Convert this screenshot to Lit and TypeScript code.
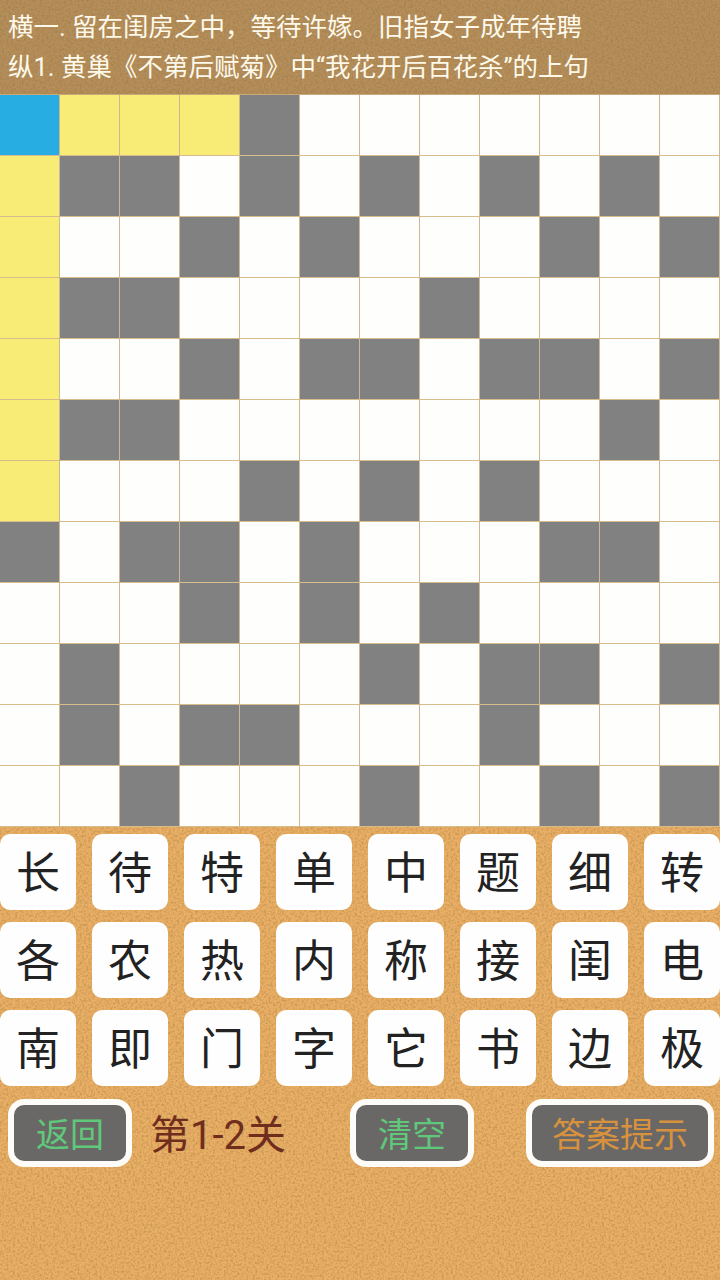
import { LitElement, html, css, svg } from "lit";
import { customElement } from "lit/decorators.js";

const MAP = [
  "byyyd.......",
  "ydd.d.d.d.d.",
  "y..d.d...d.d",
  "ydd....d....",
  "y..d.dd.dd.d",
  "ydd.......d.",
  "y...d.d.d...",
  "d.dd.d...dd.",
  "...d.d.d....",
  ".d....d.dd.d",
  ".d.dd...d...",
  "..d...d..d.d",
];
const KEYS = [
  ["长", "待", "特", "单", "中", "题", "细", "转"],
  ["各", "农", "热", "内", "称", "接", "闺", "电"],
  ["南", "即", "门", "字", "它", "书", "边", "极"],
];
const CLS: Record<string, string> = { b: "blue", y: "yellow", d: "dark", ".": "" };

@customElement("app-root")
export class AppRoot extends LitElement {
  static styles = css`
    :host {
      display: block;
      position: relative;
      width: 720px;
      height: 1280px;
      overflow: hidden;
      background: #eaaf66;
      font-family: Roboto, "Noto Sans CJK SC", sans-serif;
    }
    .noise {
      position: absolute;
      inset: 0;
      width: 720px;
      height: 1280px;
      pointer-events: none;
    }
    .page {
      position: relative;
      display: flex;
      flex-direction: column;
    }
    .clue {
      height: 95px;
      box-sizing: border-box;
      padding: 7px 0 0 8px;
      background: rgba(132, 112, 78, 0.52);
      border-bottom: 1px solid #c9a878;
      color: #fdf9ea;
      font-size: 25.5px;
      line-height: 40px;
      font-weight: 400;
      white-space: pre;
    }
    .grid {
      display: grid;
      grid-template-columns: repeat(12, 60px);
      grid-auto-rows: 61px;
    }
    .cell {
      box-sizing: border-box;
      background: #fefefd;
      border-right: 1px solid #c9b995;
      border-bottom: 1px solid #d6bd8b;
    }
    .yellow { background: #f9ec76; }
    .blue { background: #27ade2; }
    .dark { background: #818181; }
    .keys {
      display: flex;
      flex-direction: column;
      gap: 12px;
      margin-top: 7px;
    }
    .row {
      display: flex;
      justify-content: space-between;
    }
    .key {
      width: 76px;
      height: 76px;
      box-sizing: border-box;
      padding-bottom: 4px;
      border-radius: 10px;
      background: #fefefe;
      color: #222;
      font-size: 44px;
      font-weight: 400;
      display: flex;
      align-items: center;
      justify-content: center;
    }
    .bar {
      display: flex;
      align-items: center;
      margin-top: 13px;
      padding-left: 8px;
    }
    .btn {
      box-sizing: border-box;
      height: 68px;
      padding-bottom: 2px;
      border: 6px solid #fdfcf8;
      border-radius: 16px;
      background: #6a6867;
      font-size: 34px;
      display: flex;
      align-items: center;
      justify-content: center;
    }
    .back { width: 124px; }
    .clear { width: 124px; margin-right: 52px; }
    .hint { width: 188px; color: #d8923e; }
    .green { color: #5fc87a; }
    .level {
      width: 218px;
      box-sizing: border-box;
      padding: 0 0 2px 18px;
      color: #6f2e1d;
      font-size: 40px;
    }
  `;

  render() {
    return html`
      <svg class="noise" viewBox="0 0 720 1280" aria-hidden="true">
        ${svg`<filter id="grain" x="0" y="0" width="100%" height="100%">
          <feTurbulence type="fractalNoise" baseFrequency="0.45" numOctaves="3" seed="4"/>
          <feColorMatrix type="matrix" values="0 0 0 0 0.4  0 0 0 0 0.22  0 0 0 0 0.05  2.4 0 0 0 -0.98"/>
        </filter>
        <rect width="720" height="1280" filter="url(#grain)" opacity="0.55"/>`}
      </svg>
      <div class="page">
        <div class="clue">横一. 留在闺房之中，等待许嫁。旧指女子成年待聘
纵1. 黄巢《不第后赋菊》中“我花开后百花杀”的上句</div>
        <div class="grid">
          ${MAP.flatMap((r) => [...r].map((c) => html`<div class="cell ${CLS[c]}"></div>`))}
        </div>
        <div class="keys">
          ${KEYS.map(
            (r) => html`<div class="row">${r.map((k) => html`<div class="key">${k}</div>`)}</div>`
          )}
        </div>
        <div class="bar">
          <div class="btn back green">返回</div>
          <div class="level">第1-2关</div>
          <div class="btn clear green">清空</div>
          <div class="btn hint">答案提示</div>
        </div>
      </div>
    `;
  }
}
